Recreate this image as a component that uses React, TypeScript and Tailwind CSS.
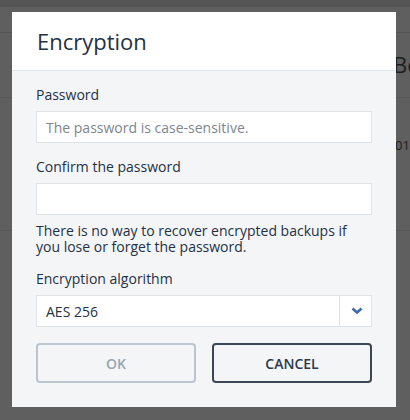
const font = { fontFamily: '"Open Sans", "Liberation Sans", sans-serif' };

function Field(props: { label: string; placeholder?: string }) {
  return (
    <div className="flex flex-col gap-[6px]">
      <label className="text-[14px] leading-[20px] text-[#243143]">
        {props.label}
      </label>
      <input
        type="password"
        placeholder={props.placeholder}
        className="h-[32px] w-full border border-[#e0e4e9] bg-white px-[9px] text-[14px] text-[#243143] outline-none placeholder:text-[#7d8590]"
      />
    </div>
  );
}

export default function App() {
  return (
    <div
      className="relative h-[420px] w-[410px] overflow-hidden bg-[#5f5f5f]"
      style={font}
    >
      {/* page behind the overlay */}
      <div className="flex flex-col">
        <div className="h-[7px] bg-[#555555]" />
        <div className="h-[26px] border-b border-[#555555]" />
        <div className="h-[65px] border-b border-[#585858] pl-[393px] pt-[16px] text-[22px] leading-[30px] text-[#1e1e1e]">
          Bo
        </div>
        <div className="h-[133px] border-b border-[#585858] pl-[395px] pt-[38px] text-[13px] leading-[18px] text-[#1e1e1e]">
          01
        </div>
      </div>

      {/* dialog */}
      <div className="absolute left-[12px] top-[12px] flex w-[384px] flex-col bg-[#f4f5f7]">
        <div className="h-[59px] border-b border-[#e3e6ea] bg-white px-[25px] pt-[14px]">
          <h1 className="text-[22px] leading-[30px] text-[#243143]">
            Encryption
          </h1>
        </div>
        <div className="flex flex-col px-[24px] pb-[24px] pt-[14px]">
          <Field label="Password" placeholder="The password is case-sensitive." />
          <div className="mt-[14px]">
            <Field label="Confirm the password" />
          </div>
          <p className="mt-[8px] text-[14px] leading-[16px] text-[#243143]">
            There is no way to recover encrypted backups if you lose or forget
            the password.
          </p>
          <div className="mt-[14px] flex flex-col gap-[6px]">
            <label className="text-[14px] leading-[20px] text-[#243143]">
              Encryption algorithm
            </label>
            <div className="flex h-[32px] border border-[#e0e4e9] bg-white">
              <div className="flex flex-1 items-center px-[9px] text-[14px] text-[#243143]">
                AES 256
              </div>
              <div className="flex w-[32px] items-center justify-center border-l border-[#e0e4e9]">
                <svg width="12" height="8" viewBox="0 0 12 8" className="ml-[2px]">
                  <path
                    d="M1.5 1.5 L6 5.5 L10.5 1.5"
                    fill="none"
                    stroke="#3d6bad"
                    strokeWidth="2.6"
                  />
                </svg>
              </div>
            </div>
          </div>
          <div className="mt-[16px] grid grid-cols-2 gap-[16px]">
            <button className="h-[40px] rounded-[4px] border-2 border-[#bcc5ce] text-[14px] font-semibold text-[#9ba4ae]">
              OK
            </button>
            <button className="h-[40px] rounded-[4px] border-2 border-[#3c4756] text-[14px] font-semibold text-[#2b394b]">
              CANCEL
            </button>
          </div>
        </div>
      </div>
    </div>
  );
}
